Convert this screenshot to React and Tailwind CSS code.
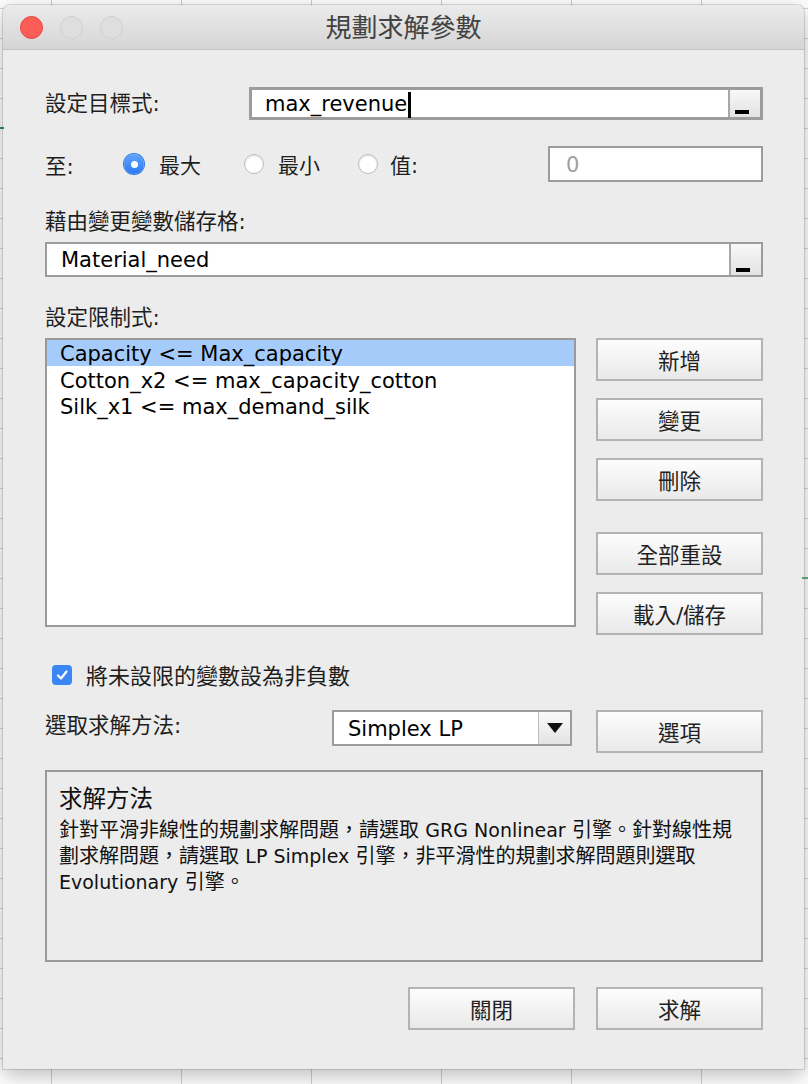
import React from "react";

const F = "font-['DejaVu_Sans','Noto_Sans_CJK_TC',sans-serif]";

function Btn({ children, className = "" }) {
  return (
    <div
      className={`w-[167px] h-[43px] border-2 border-[#b3b3b3] bg-linear-to-b from-[#fdfdfd] to-[#e9e9e9] text-[21.5px] text-[#222] flex items-center justify-center pt-[5px] ${className}`}
    >
      {children}
    </div>
  );
}

function MiniBtn() {
  return (
    <div className="w-[32px] h-full border-l-2 border-[#a8a8a8] bg-linear-to-b from-[#f8f8f8] to-[#e2e2e2] relative">
      <div className="absolute left-[5px] bottom-[3px] w-[14px] h-[4px] bg-black" />
    </div>
  );
}

function Radio({ on }) {
  if (on) {
    return (
      <div className="w-[20px] h-[20px] rounded-full bg-linear-to-b from-[#5ea4ff] to-[#2b78f0] flex items-center justify-center shadow-[0_0_0_1px_#2f79e6]">
        <div className="w-[7px] h-[7px] rounded-full bg-white" />
      </div>
    );
  }
  return (
    <div className="w-[20px] h-[20px] rounded-full bg-white border border-[#bdbdbd] shadow-[inset_0_1px_2px_rgba(0,0,0,0.12)]" />
  );
}

export default function App() {
  return (
    <div
      className={`relative w-[808px] h-[1084px] overflow-hidden bg-white ${F} bg-[linear-gradient(to_right,#cfcfcf_1px,transparent_1px),linear-gradient(to_bottom,#d6d6d6_1px,transparent_1px)] bg-[size:130px_30px] bg-[position:51px_8px]`}
    >
      <div className="absolute left-0 top-[127px] w-[4px] h-[2px] bg-[#2e7d4f]" />
      <div className="absolute right-0 top-[577px] w-[6px] h-[2px] bg-[#5a9a72]" />
      <div className="ml-[3px] mt-[5px] w-[801px] h-[1064px] bg-[#ececec] rounded-t-[7px] shadow-[0_6px_22px_rgba(0,0,0,0.28),0_0_0_1px_rgba(0,0,0,0.12)] flex flex-col">
        {/* Title bar */}
        <div className="relative h-[45px] rounded-t-[7px] border-b border-[#c2c2c2] bg-linear-to-b from-[#ebebeb] to-[#d5d5d5] flex items-center justify-center">
          <div className="absolute left-[17px] top-[11px] flex gap-[17px]">
            <div className="w-[23px] h-[23px] rounded-full bg-[#fd5d56] border border-[#e2463f]" />
            <div className="w-[23px] h-[23px] rounded-full bg-[#dedede] border border-[#cfcfcf]" />
            <div className="w-[23px] h-[23px] rounded-full bg-[#dedede] border border-[#cfcfcf]" />
          </div>
          <div className="text-[26px] text-[#424242] leading-none pt-[2px]">規劃求解參數</div>
        </div>

        {/* Body */}
        <div className="pl-[42px] pr-[41px] flex flex-col text-[#1e1e1e]">
          {/* Row 1 */}
          <div className="mt-[37px] h-[33px] flex items-center">
            <div className="w-[204px] text-[21.5px] pt-[2px]">設定目標式:</div>
            <div className="flex-1 h-full border-[3px] border-[#9c9c9c] bg-white flex">
              <div className="flex-1 flex items-center pl-[13px] pt-[3px] text-[21px] text-black">
                <span>max_revenue</span>
                <span className="ml-[1px] w-[3px] h-[26px] bg-black" />
              </div>
              <MiniBtn />
            </div>
          </div>

          {/* Row 2 */}
          <div className="mt-[26px] h-[36px] flex items-center text-[21px]">
            <div className="w-[79px] pt-[6px] text-[21.5px]">至:</div>
            <Radio on />
            <div className="ml-[15px] w-[85px] pt-[6px]">最大</div>
            <Radio />
            <div className="ml-[14px] w-[80px] pt-[6px]">最小</div>
            <Radio />
            <div className="ml-[12px] pt-[6px]">值:</div>
            <div className="ml-auto w-[215px] h-full border-2 border-[#9c9c9c] bg-white flex items-center pl-[16px] pt-[3px] text-[21px] text-[#a0a0a0]">
              0
            </div>
          </div>

          {/* Row 3 */}
          <div className="mt-[26px] h-[28px] flex items-center text-[21.5px]">藉由變更變數儲存格:</div>
          <div className="mt-[6px] h-[35px] border-2 border-[#9c9c9c] bg-white flex">
            <div className="flex-1 flex items-center pl-[14px] pt-[3px] text-[21px] text-black">Material_need</div>
            <MiniBtn />
          </div>

          {/* Row 4 */}
          <div className="mt-[27px] h-[28px] flex items-center text-[21.5px] pt-[1px]">設定限制式:</div>
          <div className="mt-[6px] flex">
            <div className="w-[531px] h-[289px] border-2 border-[#9a9a9a] bg-white flex flex-col text-[21px] text-black">
              <div className="h-[26px] bg-[#a5cbfb] flex items-center pl-[13px] pt-[4px]">Capacity &lt;= Max_capacity</div>
              <div className="h-[27px] flex items-center pl-[13px] pt-[4px]">Cotton_x2 &lt;= max_capacity_cotton</div>
              <div className="h-[26px] flex items-center pl-[13px] pt-[4px]">Silk_x1 &lt;= max_demand_silk</div>
            </div>
            <div className="ml-auto flex flex-col">
              <Btn>新增</Btn>
              <Btn className="mt-[17px]">變更</Btn>
              <Btn className="mt-[17px]">刪除</Btn>
              <Btn className="mt-[31px]">全部重設</Btn>
              <Btn className="mt-[17px]">載入/儲存</Btn>
            </div>
          </div>

          {/* Checkbox */}
          <div className="mt-[26px] h-[28px] flex items-center text-[22px]">
            <div className="ml-[7px] w-[20px] h-[20px] rounded-[4px] bg-[#3a86f5] flex items-center justify-center">
              <svg width="14" height="14" viewBox="0 0 14 14" fill="none">
                <path d="M3 7.5 L6 10.5 L11.5 3.5" stroke="white" strokeWidth="2.2" strokeLinecap="round" strokeLinejoin="round" />
              </svg>
            </div>
            <div className="ml-[14px] pt-[2px]">將未設限的變數設為非負數</div>
          </div>

          {/* Select row */}
          <div className="mt-[21px] h-[43px] flex items-start">
            <div className="w-[287px] h-[30px] flex items-center text-[21.5px] pt-[3px]">選取求解方法:</div>
            <div className="w-[240px] h-[36px] border-2 border-[#9c9c9c] bg-white flex">
              <div className="flex-1 flex items-center pl-[14px] pt-[3px] text-[21px] text-black">Simplex LP</div>
              <div className="w-[32px] h-full border-l border-[#bdbdbd] bg-linear-to-b from-[#fafafa] to-[#e4e4e4] flex items-center justify-center">
                <svg width="16" height="10" viewBox="0 0 16 10">
                  <polygon points="0,0 16,0 8,10" fill="#111" />
                </svg>
              </div>
            </div>
            <Btn className="ml-auto">選項</Btn>
          </div>

          {/* Solve method box */}
          <div className="mt-[17px] h-[192px] border-2 border-[#9a9a9a] pl-[12px] pt-[13px] flex flex-col">
            <div className="h-[30px] flex items-center text-[23.5px] text-[#111]">求解方法</div>
            <div className="mt-[2px] text-[20px] leading-[26px] text-[#111] whitespace-nowrap">
              <div>針對平滑非線性的規劃求解問題，請選取 <span className="text-[19px]">GRG Nonlinear</span> 引擎。針對線性規</div>
              <div>劃求解問題，請選取 <span className="text-[19px]">LP Simplex</span> 引擎，非平滑性的規劃求解問題則選取</div>
              <div><span className="text-[19px]">Evolutionary</span> 引擎。</div>
            </div>
          </div>

          {/* Bottom buttons */}
          <div className="mt-[25px] flex justify-end gap-[21px]">
            <Btn className="h-[42px]">關閉</Btn>
            <Btn className="h-[42px]">求解</Btn>
          </div>
        </div>
      </div>
    </div>
  );
}
